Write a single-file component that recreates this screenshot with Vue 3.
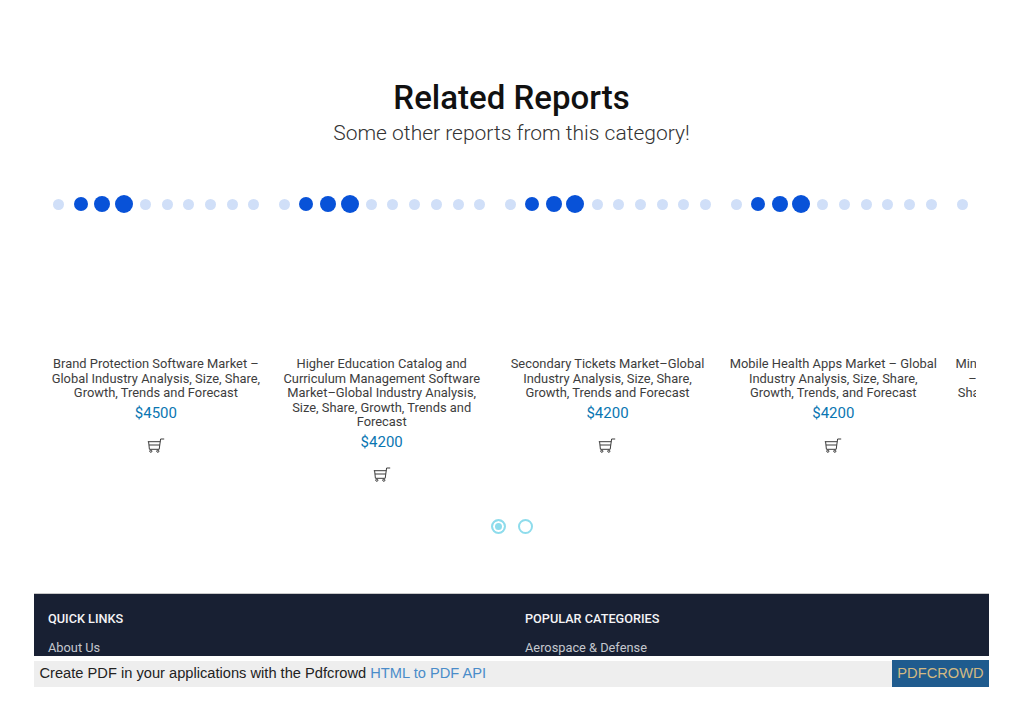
<script setup>
const cards = [
  { title: 'Brand Protection Software Market – Global Industry Analysis, Size, Share, Growth, Trends and Forecast', price: '$4500' },
  { title: 'Higher Education Catalog and Curriculum Management Software Market–Global Industry Analysis, Size, Share, Growth, Trends and Forecast', price: '$4200' },
  { title: 'Secondary Tickets Market–Global Industry Analysis, Size, Share, Growth, Trends and Forecast', price: '$4200' },
  { title: 'Mobile Health Apps Market – Global Industry Analysis, Size, Share, Growth, Trends, and Forecast', price: '$4200' },
  { title: 'Mining Automation Software Market – Global Industry Analysis, Size, Share, Growth, Trends and Forecast', price: '$4200' }
]
const dots = ['s', 'a1', 'a2', 'a3', 's', 's', 's', 's', 's', 's']
</script>

<template>
  <div class="page">
    <header class="head">
      <h2>Related Reports</h2>
      <p>Some other reports from this category!</p>
    </header>

    <div class="viewport">
      <div class="track">
        <article v-for="c in cards" :key="c.title" class="card">
          <div class="dots">
            <span v-for="(d, i) in dots" :key="i" class="dot-cell"><i :class="['dot', d]"></i></span>
          </div>
          <h3>{{ c.title }}</h3>
          <div class="price">{{ c.price }}</div>
          <svg class="cart" width="18" height="15" viewBox="0 0 18 15" fill="none" stroke="#3c3c3c" stroke-width="1">
            <path d="M17.2 1h-3.6l-1.4 10.3H2.4L1.6 3.7" />
            <path d="M.8 3.7h12.5M2 7h10.8" />
            <circle cx="3.8" cy="13.2" r="1.1" />
            <circle cx="10.8" cy="13.2" r="1.1" />
          </svg>
        </article>
      </div>
    </div>

    <div class="pager">
      <span class="pg on"></span>
      <span class="pg"></span>
    </div>

    <footer class="foot">
      <div class="col">
        <h4>QUICK LINKS</h4>
        <a>About Us</a>
      </div>
      <div class="col">
        <h4>POPULAR CATEGORIES</h4>
        <a>Aerospace &amp; Defense</a>
      </div>
    </footer>

    <div class="bar">
      <div class="bar-text">Create PDF in your applications with the Pdfcrowd <a>HTML to PDF API</a></div>
      <div class="bar-btn">PDFCROWD</div>
    </div>
  </div>
</template>

<style>
html, body { margin: 0; background: #fff; }
</style>

<style scoped>
.page {
  width: 955px;
  height: 724px;
  margin: 0 auto;
  overflow: hidden;
  font-family: Roboto, sans-serif;
  box-sizing: border-box;
  padding-top: 78px;
}
.head { text-align: center; }
.head h2 {
  margin: 0;
  font-size: 33px;
  line-height: 40px;
  font-weight: 500;
  color: #111;
}
.head p {
  margin: 2px 0 0;
  font-size: 21px;
  line-height: 26px;
  font-weight: 300;
  color: #333;
}
.viewport {
  margin: 49px 13px 0 9px;
  overflow: hidden;
}
.track { display: flex; width: 1129px; }
.card {
  flex: 0 0 225.75px;
  box-sizing: border-box;
  padding: 0 4px;
  display: flex;
  flex-direction: column;
  align-items: center;
  height: 324px;
}
.dots {
  display: flex;
  align-items: center;
  height: 18px;
  width: 216.8px;
  align-self: flex-start;
  margin: 0 0 144px 1px;
}
.dot-cell {
  flex: 0 0 21.68px;
  display: flex;
  justify-content: center;
}
.dot { display: block; border-radius: 50%; background: #d0dff8; width: 11px; height: 11px; }
.dot.a1 { background: #0852d8; width: 14px; height: 14px; }
.dot.a2 { background: #0852d8; width: 16px; height: 16px; }
.dot.a3 { background: #0852d8; width: 18px; height: 18px; }
.card h3 {
  margin: 0;
  width: 100%;
  box-sizing: border-box;
  padding: 0 3px;
  text-align: center;
  font-size: 12.9px;
  line-height: 14.6px;
  font-weight: 400;
  color: #3d3d3d;
}
.price {
  margin-top: 2px;
  font-size: 15px;
  line-height: 20px;
  font-weight: 400;
  color: #0a76b2;
}
.cart { margin-top: 15px; display: block; }
.pager {
  display: flex;
  justify-content: center;
  gap: 12px;
  padding-left: 1px;
  height: 15px;
}
.pg {
  width: 15px;
  height: 15px;
  box-sizing: border-box;
  border: 2px solid #8edcec;
  border-radius: 50%;
  background: #fff;
}
.pg.on {
  background: #8edcec;
  box-shadow: inset 0 0 0 2px #fff;
}
.foot {
  margin-top: 59px;
  height: 63px;
  background: #182033;
  border-top: 1px solid #c9c9c9;
  box-sizing: border-box;
  display: flex;
  padding: 0 14px;
  overflow: hidden;
}
.col { flex: 0 0 477px; }
.col h4 {
  margin: 17px 0 0;
  font-size: 12.7px;
  line-height: 16px;
  font-weight: 500;
  color: #f4f4f6;
}
.col a {
  display: block;
  margin-top: 13px;
  font-size: 12.8px;
  line-height: 16px;
  color: #c4c7ce;
}
.bar {
  display: flex;
  height: 27px;
  margin-top: 4px;
  font-family: "Liberation Sans", Arial, sans-serif;
  font-size: 14.67px;
}
.bar-text {
  flex: 1;
  background: #eeeeee;
  color: #222;
  padding-left: 5.5px;
  line-height: 25px;
  margin-top: 1px;
}
.bar-text a { color: #4a8cc9; }
.bar-btn {
  width: 97px;
  background: #1f5b8e;
  color: #d2b983;
  text-align: center;
  line-height: 27px;
}
</style>
